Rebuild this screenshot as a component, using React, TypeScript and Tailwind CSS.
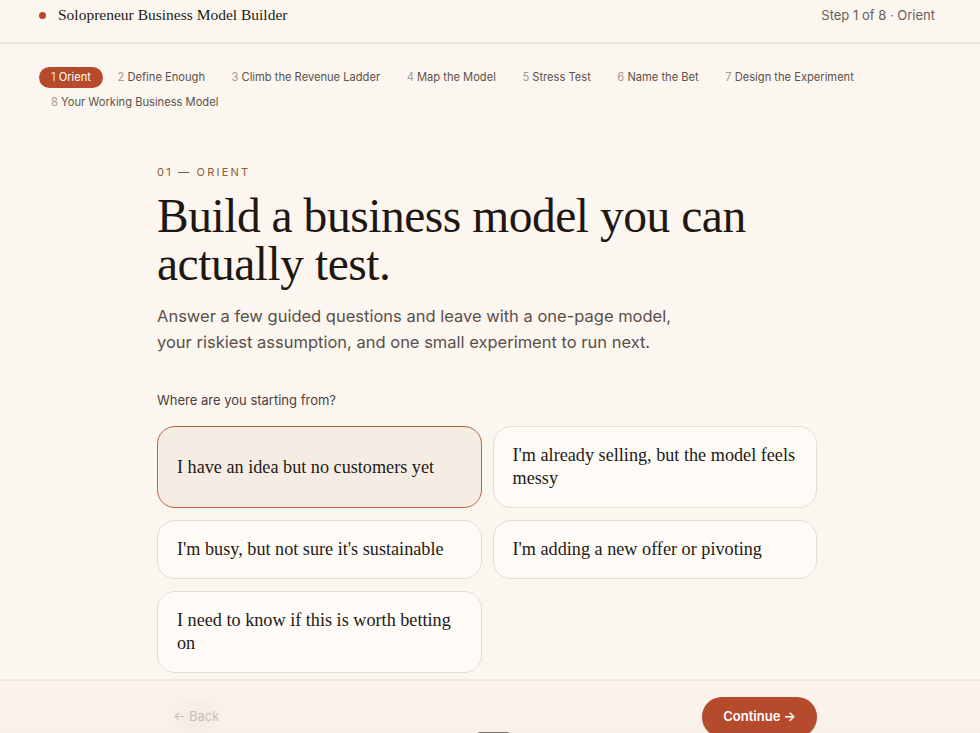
import { useState } from "react";

const steps = [
  "Orient",
  "Define Enough",
  "Climb the Revenue Ladder",
  "Map the Model",
  "Stress Test",
  "Name the Bet",
  "Design the Experiment",
  "Your Working Business Model",
];

const options = [
  "I have an idea but no customers yet",
  "I'm already selling, but the model feels messy",
  "I'm busy, but not sure it's sustainable",
  "I'm adding a new offer or pivoting",
  "I need to know if this is worth betting on",
];

const serif = "font-['Liberation_Serif',Georgia,serif]";
const sans = "font-['Inter','Liberation_Sans',sans-serif]";

export default function App() {
  const [selected, setSelected] = useState(0);
  const current = 0;

  return (
    <div className={`min-h-screen bg-[#fcf6f0] text-[#2a1f1a] ${sans}`}>
      {/* Header */}
      <header className="h-[44px] flex items-start justify-between pl-[39px] pr-[45px] pt-[5px] border-b-2 border-[#ece4db]">
        <div className="flex items-center gap-3 h-5">
          <span className="w-[7px] h-[7px] rounded-full bg-[#b54a2c]" />
          <span className={`${serif} text-[15.5px] leading-5 text-[#231a15]`}>
            Solopreneur Business Model Builder
          </span>
        </div>
        <div className="h-5 flex items-center pt-[2px] text-[13px] text-[#6a6058]">
          Step 1 of 8 · Orient
        </div>
      </header>

      {/* Stepper */}
      <nav className="px-[39px] pt-[23px] flex flex-wrap gap-x-[2.5px] gap-y-[4px]">
        {steps.map((s, i) => (
          <button
            key={s}
            className={`px-3 py-[3px] rounded-full text-[11.15px] leading-[15px] ${
              i === current ? "bg-[#b54a2c] text-white" : "text-[#5b5249]"
            }`}
          >
            <span className={i === current ? "text-[#f6dccf]" : "text-[#a59a90]"}>{i + 1}</span>{" "}
            {s}
          </button>
        ))}
      </nav>

      {/* Main */}
      <main className="ml-[157px] w-[660px] pt-[51px]">
        <div className="text-[11px] leading-4 tracking-[0.2em] text-[#8b5e34]">01 — ORIENT</div>
        <h1 className={`${serif} mt-[12px] text-[47.5px] leading-[48px] text-[#1f1712] tracking-[-0.01em]`}>
          Build a business model you can actually test.
        </h1>
        <p className="mt-[15px] text-[16.5px] leading-[26px] text-[#5a5048] max-w-[540px]">
          Answer a few guided questions and leave with a one-page model, your riskiest assumption, and one
          small experiment to run next.
        </p>

        <div className="mt-[35px] text-[13px] leading-5 text-[#4a4038]">Where are you starting from?</div>

        <div className="mt-4 grid grid-cols-2 gap-x-[11px] gap-y-3">
          {options.map((o, i) => (
            <button
              key={o}
              onClick={() => setSelected(i)}
              className={`${serif} text-left rounded-[18px] border px-[19px] py-[17px] text-[18.2px] leading-[23px] text-[#231a15] flex items-center ${
                i === selected
                  ? "bg-[#f5ede4] border-[#b8643e]"
                  : "bg-[#fefbf7] border-[#e6ddd3]"
              }`}
            >
              {o}
            </button>
          ))}
        </div>
      </main>

      {/* Footer */}
      <footer className="relative mt-[6px] border-t-2 border-[#f1e9e0] bg-gradient-to-b from-[#faf4ed] to-[#f8f1e9]">
        <div className="ml-[157px] w-[660px] pt-4 pb-4 flex items-center justify-between">
          <button className="h-10 px-4 rounded-full text-[13px] text-[#cbc1b7] bg-[radial-gradient(circle,rgba(240,230,218,0.55),transparent_70%)]">
            ← Back
          </button>
          <button className="h-10 px-[21px] rounded-full bg-[#b54a2c] text-white text-[13px] font-semibold shadow-[0_1px_2px_rgba(0,0,0,0.12)]">
            Continue →
          </button>
        </div>
        <div className="absolute left-[477px] top-[51px] w-[33px] h-2 rounded-t-[3px] bg-[#7a7068]" />
      </footer>
    </div>
  );
}
